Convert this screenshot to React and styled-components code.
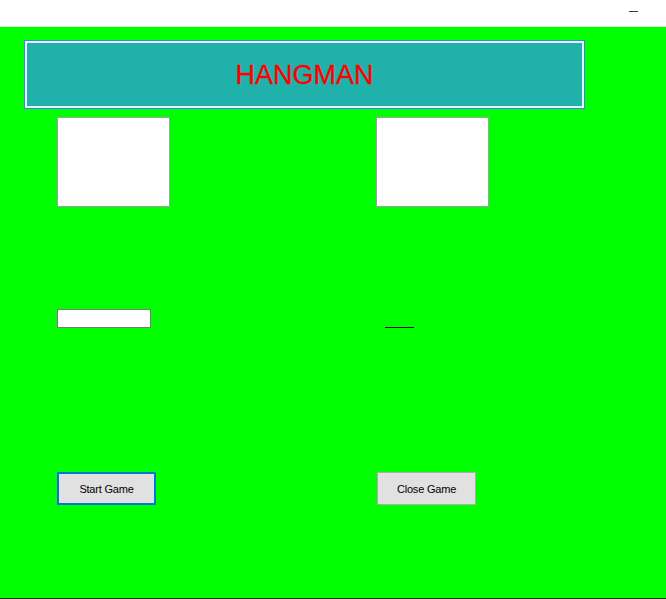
import React from "react";
import styled, { createGlobalStyle } from "styled-components";

const GlobalStyle = createGlobalStyle`
  html, body {
    margin: 0;
    padding: 0;
    overflow: hidden;
  }
  body {
    font-family: "Liberation Sans", Arial, sans-serif;
  }
`;

const Window = styled.div`
  display: flex;
  flex-direction: column;
  width: 666px;
  height: 599px;
  background: #ffffff;
`;

const TitleBar = styled.div`
  display: flex;
  justify-content: flex-end;
  align-items: center;
  height: 26px;
  border-bottom: 1px solid #e3e3e3;
  background: #ffffff;
`;

const MinimizeButton = styled.div`
  display: flex;
  align-items: center;
  justify-content: center;
  width: 46px;
  height: 26px;
  margin-right: 10px;

  &::before {
    content: "";
    width: 9px;
    height: 1px;
    background: #3c3c3c;
    margin-top: -3px;
  }
`;

const Body = styled.div`
  flex: 1;
  display: flex;
  flex-direction: column;
  background: #00ff00;
  padding: 13px 0 0 24px;
  border-bottom: 1px solid #2b2b2b;
`;

const Header = styled.div`
  display: flex;
  align-items: center;
  justify-content: center;
  box-sizing: border-box;
  width: 561px;
  height: 69px;
  border: 1px solid #3b82f6;
  box-shadow: inset 0 0 0 2px #e6f0fa;
  background: #20b2aa;
`;

const Title = styled.h1`
  margin: 0;
  margin-top: 2px;
  font-family: "Liberation Sans", Arial, sans-serif;
  font-weight: normal;
  font-size: 27px;
  color: #ff0000;
  -webkit-text-stroke: 0.3px #ff0000;
`;

const Grid = styled.div`
  display: grid;
  grid-template-columns: 319px 1fr;
  grid-template-rows: 192px 163px auto;
  margin: 8px 0 0 33px;
  align-items: start;
`;

const PictureBox = styled.div`
  box-sizing: border-box;
  width: 113px;
  height: 90px;
  background: #ffffff;
  border: 1px solid #a0a0a0;
`;

const TextBox = styled.input`
  box-sizing: border-box;
  width: 94px;
  height: 19px;
  margin: 0;
  padding: 0 2px;
  border: 1px solid #7a7a7a;
  background: #ffffff;
  outline: none;
`;

const Blank = styled.div`
  width: 29px;
  height: 19px;
  margin-left: 9px;
  box-sizing: border-box;
  border-bottom: 1px solid #111111;
`;

const Button = styled.button`
  box-sizing: border-box;
  width: 99px;
  height: 33px;
  margin: 0 0 0 ${(props) => (props.$focused ? "0" : "1px")};
  padding: 0;
  background: #e1e1e1;
  border: ${(props) => (props.$focused ? "2px solid #0078d7" : "1px solid #adadad")};
  font-family: "Liberation Sans", Arial, sans-serif;
  font-size: 11px;
  letter-spacing: -0.2px;
  color: #000000;
  cursor: pointer;
`;

const App = () => {
  return (
    <Window>
      <GlobalStyle />
      <TitleBar>
        <MinimizeButton />
      </TitleBar>
      <Body>
        <Header>
          <Title>HANGMAN</Title>
        </Header>
        <Grid>
          <PictureBox />
          <PictureBox />
          <TextBox />
          <Blank />
          <Button $focused>Start Game</Button>
          <Button>Close Game</Button>
        </Grid>
      </Body>
    </Window>
  );
};

export default App;
